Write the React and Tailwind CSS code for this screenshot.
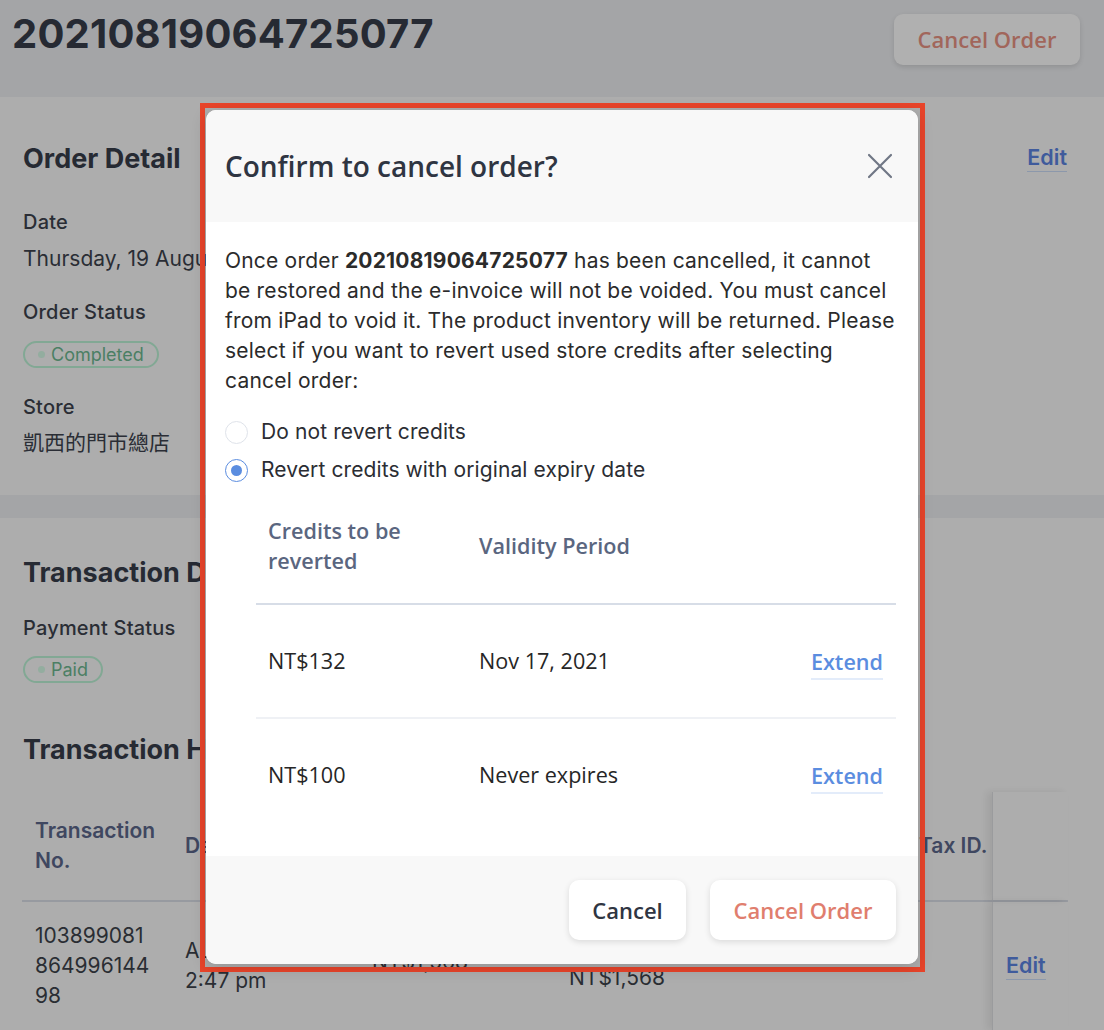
import React, { useState } from "react";

const sans = "font-['Inter','Noto_Sans_CJK_TC',sans-serif]";
const open = "font-['Open_Sans','Noto_Sans',sans-serif]";

const Badge = ({ label }) => (
  <span className="inline-flex items-center gap-[6px] h-[27px] px-[13px] rounded-full border-2 border-[#82a894] text-[#4b7f64] text-[18px] leading-none">
    <span className="w-[7px] h-[7px] rounded-full bg-[#93ad9f]" />
    {label}
  </span>
);

const Radio = ({ checked, label, onClick }) => (
  <label onClick={onClick} className="flex items-center gap-[13px] h-[38px] cursor-pointer">
    <span
      className={
        checked
          ? "w-[23px] h-[23px] rounded-full border-[1.5px] border-[#5b8de0] flex items-center justify-center"
          : "w-[23px] h-[23px] rounded-full border-[1.5px] border-[#dfe3ea]"
      }
    >
      {checked && <span className="w-[11px] h-[11px] rounded-full bg-[#5b8de0]" />}
    </span>
    <span className="text-[21px] tracking-[0.1px] text-[#2b2d33]">{label}</span>
  </label>
);

const credits = [
  { amount: "NT$132", period: "Nov 17, 2021" },
  { amount: "NT$100", period: "Never expires" },
];

const CancelModal = () => {
  const [revert, setRevert] = useState(true);
  return (
    <div className="absolute left-[200px] top-[103px] w-[725px] h-[869px] border-[5px] border-[#e8442a]">
      <div className="absolute left-[1px] top-[2px] w-[712px] h-[854px] bg-white rounded-[10px] shadow-[0_4px_16px_rgba(0,0,0,0.15)] flex flex-col overflow-hidden">
        <div className="h-[112px] shrink-0 bg-[#f8f8f8] flex items-center justify-between pl-[19px] pr-[25px]">
          <h2 className={`${open} text-[28px] font-semibold text-[#2f3542]`}>Confirm to cancel order?</h2>
          <svg width="26" height="26" viewBox="0 0 26 26" fill="none" stroke="#707785" strokeWidth="2.2" strokeLinecap="round">
            <path d="M2 2L24 24M24 2L2 24" />
          </svg>
        </div>

        <div className="flex-1 pl-[19px] pr-[22px] pt-[24px]">
          <p className={`${sans} text-[21px] tracking-[0.2px] leading-[30px] text-[#2b2b2b]`}>
            Once order <b className="font-bold">20210819064725077</b> has been cancelled, it cannot be restored and the
            e-invoice will not be voided. You must cancel from iPad to void it. The product inventory will be returned.
            Please select if you want to revert used store credits after selecting cancel order:
          </p>

          <div className={`${sans} mt-[17px]`}>
            <Radio checked={!revert} label="Do not revert credits" onClick={() => setRevert(false)} />
            <Radio checked={revert} label="Revert credits with original expiry date" onClick={() => setRevert(true)} />
          </div>

          <div className={`${open} ml-[31px] text-[21.6px]`}>
            <div className="grid grid-cols-[211px_1fr_auto] items-center py-[27px] pl-[12px] pr-[13px] border-b-2 border-[#d7dde7] text-[#5a6680] font-semibold leading-[30px]">
              <div>
                Credits to be
                <br />
                reverted
              </div>
              <div>Validity Period</div>
              <div />
            </div>
            {credits.map((c, i) => (
              <div
                key={c.amount}
                className={
                  i === 0
                    ? "grid grid-cols-[211px_1fr_auto] items-center h-[114px] pl-[12px] pr-[13px] border-b-2 border-[#eff1f5] text-[#262626]"
                    : "grid grid-cols-[211px_1fr_auto] items-center h-[112px] pl-[12px] pr-[13px] text-[#262626]"
                }
              >
                <div>{c.amount}</div>
                <div>{c.period}</div>
                <a className="font-semibold text-[#5b8de0] border-b-2 border-[#e3ecfa] leading-[28px] pb-[2px] mt-[5px]">
                  Extend
                </a>
              </div>
            ))}
          </div>
        </div>

        <div className={`${open} h-[108px] shrink-0 bg-[#f8f8f8] flex justify-end items-start gap-[24px] pt-[24px] pr-[22px]`}>
          <button className="w-[117px] h-[60px] rounded-[10px] bg-white shadow-[0_2px_6px_rgba(0,0,0,0.12)] text-[22px] font-semibold text-[#2f3542]">
            Cancel
          </button>
          <button className="w-[186px] h-[60px] rounded-[10px] bg-white shadow-[0_2px_6px_rgba(0,0,0,0.12)] text-[22px] font-semibold text-[#e07e6e]">
            Cancel Order
          </button>
        </div>
      </div>
    </div>
  );
};

const Label = ({ children, className = "" }) => (
  <div className={`text-[20px] leading-[24px] font-medium tracking-[0.2px] text-[#2a2d35] ${className}`}>{children}</div>
);

const Value = ({ children, className = "" }) => (
  <div className={`text-[21px] leading-[28px] text-[#2a2d35] whitespace-nowrap ${className}`}>{children}</div>
);

const SectionTitle = ({ children }) => (
  <h3 className="text-[27px] leading-[32px] font-bold text-[#262a33] whitespace-nowrap">{children}</h3>
);

const EditLink = ({ className = "" }) => (
  <a className={`text-[21.5px] font-semibold text-[#3f5b9c] border-b border-[#8c98ab] leading-[26px] pb-[1px] ${className}`}>
    Edit
  </a>
);

export default function App() {
  return (
    <div className={`${sans} relative h-[1030px] overflow-hidden bg-[#a4a5a7]`}>
      <header className="h-[97px] flex justify-between items-start pl-[12px] pr-[24px]">
        <h1 className="mt-[10px] text-[40px] leading-[48px] font-bold text-[#262a33] tracking-[0.2px]">
          20210819064725077
        </h1>
        <button
          className={`${open} mt-[14px] w-[186px] h-[51px] rounded-[9px] bg-[#b0b0b0] shadow-[0_2px_5px_rgba(0,0,0,0.12)] text-[22px] font-semibold text-[#a1665b]`}
        >
          Cancel Order
        </button>
      </header>

      <section className="h-[398px] bg-[#adadad] pl-[23px] pr-[37px] pt-[46px]">
        <div className="flex justify-between items-start">
          <SectionTitle>Order Detail</SectionTitle>
          <EditLink className="mt-[1px]" />
        </div>
        <Label className="mt-[35px]">Date</Label>
        <Value className="mt-[11px]">Thursday, 19 August 2021</Value>
        <Label className="mt-[27px]">Order Status</Label>
        <div className="mt-[16px]">
          <Badge label="Completed" />
        </div>
        <Label className="mt-[27px]">Store</Label>
        <Value className="mt-[10px]">凱西的門市總店</Value>
      </section>

      <div className="h-[23px]" />

      <section className="bg-[#adadad] pl-[22px] pr-[36px] pt-[39px] pb-[40px]">
        <div className="pl-[1px]">
          <SectionTitle>Transaction Details</SectionTitle>
          <Label className="mt-[27px]">Payment Status</Label>
          <div className="mt-[15px]">
            <Badge label="Paid" />
          </div>
          <div className="mt-[51px]">
            <SectionTitle>Transaction History</SectionTitle>
          </div>
        </div>

        <div className="mt-[26px] grid grid-cols-[150px_187px_197px_350px_86px_76px]">
          <div className="col-span-6 grid grid-cols-subgrid border-b-2 border-[#979aa0] text-[21px] leading-[30px] font-semibold text-[#3f4760]">
            <div className="px-[13px] py-[24px]">
              Transaction
              <br />
              No.
            </div>
            <div className="px-[13px] flex items-center">Date</div>
            <div className="px-[13px] flex items-center">Amount</div>
            <div className="px-[13px] flex items-center">Paid</div>
            <div className="pl-[13px] flex items-center whitespace-nowrap">Tax ID.</div>
            <div className="border-l border-[#9a9b9d] shadow-[-5px_0_7px_rgba(0,0,0,0.07)]" />
          </div>
          <div className="col-span-6 grid grid-cols-subgrid border-b-2 border-[#9a9da2] text-[21px] leading-[30px] text-[#2a2d33]">
            <div className="px-[13px] py-[19px]">
              103899081
              <br />
              864996144
              <br />
              98
            </div>
            <div className="px-[13px] flex flex-col justify-center">
              <span>Aug 19, 2021</span>
              <span>2:47 pm</span>
            </div>
            <div className="px-[13px] flex items-center pb-[8px]">NT$1,568</div>
            <div className="px-[13px] flex items-center pt-[24px]">NT$1,568</div>
            <div />
            <div className="border-l border-[#9a9b9d] shadow-[-5px_0_7px_rgba(0,0,0,0.07)] pl-[13px] flex items-center">
              <EditLink />
            </div>
          </div>
        </div>
      </section>

      <CancelModal />
    </div>
  );
}
